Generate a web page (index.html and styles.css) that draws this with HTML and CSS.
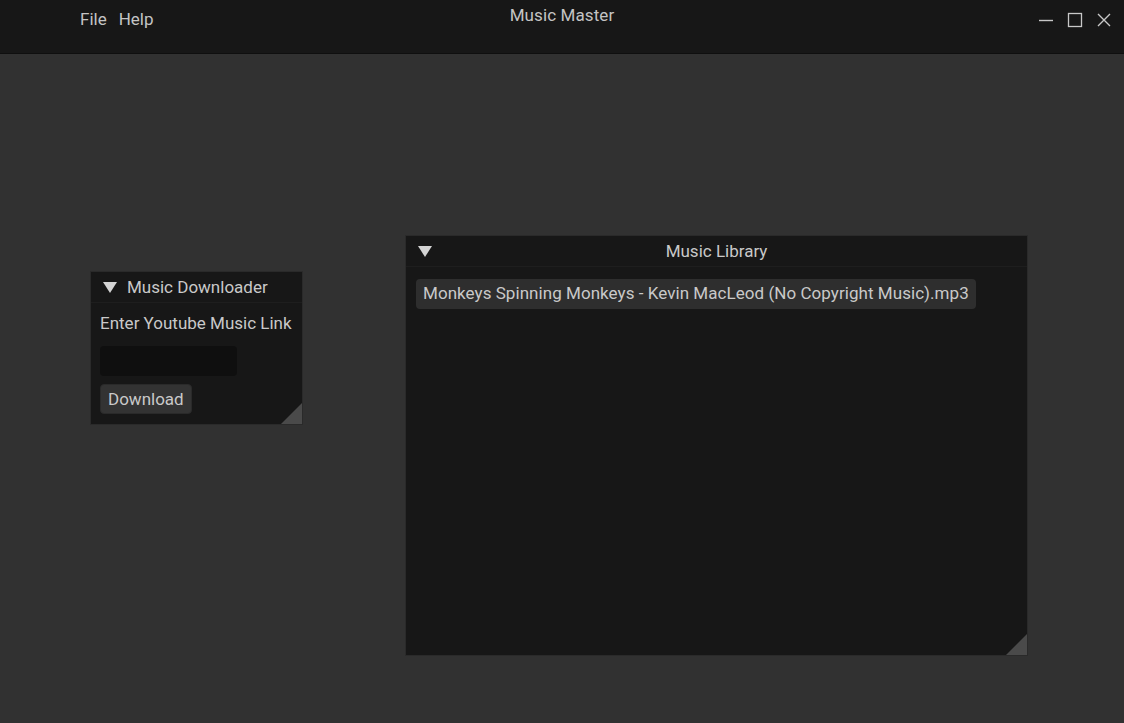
FILE: index.html
```html
<!DOCTYPE html>
<html>
<head>
<meta charset="utf-8">
<link rel="stylesheet" href="styles.css">
</head>
<body>
<div class="app">
  <header class="titlebar">
    <nav class="menu">
      <span class="menu-item">File</span>
      <span class="menu-item">Help</span>
    </nav>
    <div class="app-title">Music Master</div>
    <div class="controls">
      <svg class="ctl" width="16" height="16" viewBox="0 0 16 16"><path d="M1 8.5H15" stroke="#c8c8c8" stroke-width="1.4"/></svg>
      <svg class="ctl" width="16" height="16" viewBox="0 0 16 16"><rect x="1.5" y="1.5" width="13" height="13" fill="none" stroke="#c8c8c8" stroke-width="1.3"/></svg>
      <svg class="ctl" width="16" height="16" viewBox="0 0 16 16"><path d="M2 2L14 14M14 2L2 14" stroke="#c8c8c8" stroke-width="1.4"/></svg>
    </div>
  </header>
  <main class="canvas">
    <section class="win downloader">
      <div class="win-head">
        <span class="tri"></span>
        <span class="win-title">Music Downloader</span>
      </div>
      <div class="win-body">
        <div class="label">Enter Youtube Music Link</div>
        <div class="input"></div>
        <div class="btn">Download</div>
      </div>
      <span class="grip"></span>
    </section>
    <section class="win library">
      <div class="win-head centered">
        <span class="tri"></span>
        <span class="win-title">Music Library</span>
      </div>
      <div class="win-body">
        <div class="item">Monkeys Spinning Monkeys - Kevin MacLeod (No Copyright Music).mp3</div>
      </div>
      <span class="grip"></span>
    </section>
  </main>
</div>
</body>
</html>
```
FILE: styles.css
```css
* { box-sizing: border-box; }
html, body { margin: 0; padding: 0; }
body {
  width: 1124px;
  height: 723px;
  overflow: hidden;
  background: #313131;
  font-family: Roboto, "Liberation Sans", sans-serif;
  font-size: 17px;
  color: #c9c9c9;
}
.app { width: 1124px; height: 723px; display: flex; flex-direction: column; }
.titlebar {
  height: 54px;
  background: #171717;
  border-bottom: 1px solid #0f0f0f;
  position: relative;
  flex: none;
}
.menu {
  display: flex;
  gap: 12px;
  padding: 9px 0 0 80px;
}
.menu-item { color: #c4c4c4; }
.app-title {
  position: absolute;
  left: 0; right: 0; top: 5px;
  text-align: center;
  color: #c4c4c4;
  letter-spacing: 0.1px;
}
.controls {
  position: absolute;
  right: 12px;
  top: 12px;
  display: flex;
  gap: 13px;
}
.ctl { display: block; }
.canvas { flex: 1; position: relative; }
.win {
  position: absolute;
  background: #171717;
  border: 1px solid #2a2a2a;
}
.downloader { left: 90px; top: 217px; width: 213px; height: 154px; }
.library { left: 405px; top: 181px; width: 623px; height: 421px; }
.win-head {
  height: 31px;
  display: flex;
  align-items: center;
  padding-left: 12px;
  border-bottom: 1px solid #1e1e1e;
  position: relative;
}
.tri {
  width: 0; height: 0;
  border-left: 7px solid transparent;
  border-right: 7px solid transparent;
  border-top: 11px solid #d4d4d4;
  margin-right: 10px;
}
.win-title { color: #c9c9c9; }
.centered .win-title {
  position: absolute;
  left: 0; right: 0;
  text-align: center;
}
.win-body { padding: 9px 9px; }
.downloader .win-body { display: flex; flex-direction: column; align-items: flex-start; }
.label { height: 22px; line-height: 22px; }
.input {
  margin-top: 12px;
  width: 137px;
  height: 30px;
  background: #0f0f0f;
  border-radius: 4px;
}
.btn {
  margin-top: 8px;
  height: 30px;
  padding: 0 7px;
  background: #333333;
  border-radius: 4px;
  border: 1px solid #2a2a2a;
  line-height: 28px;
}
.library .win-body { padding: 12px 10px; }
.item {
  display: inline-block;
  height: 30px;
  line-height: 29px;
  padding: 0 7px;
  background: #2e2e2e;
  border-radius: 4px;
  letter-spacing: 0.05px;
}
.grip {
  position: absolute;
  right: 0; bottom: 0;
  width: 0; height: 0;
  border-left: 21px solid transparent;
  border-bottom: 21px solid #4a4a4a;
}
```
